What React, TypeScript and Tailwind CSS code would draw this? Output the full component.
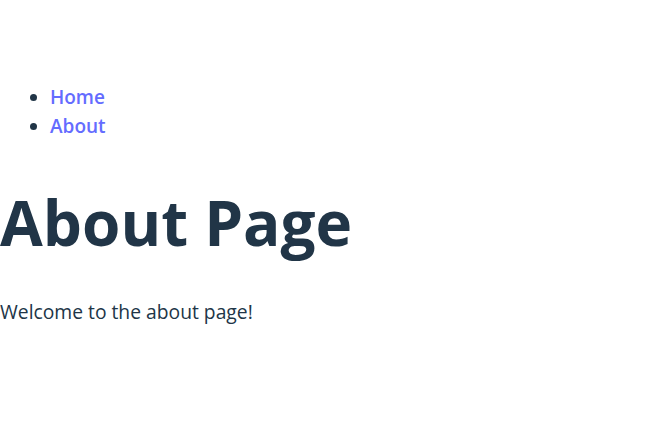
export default function App() {
  return (
    <div className="min-h-screen bg-white pt-[83px] text-[19px] leading-[29px] text-[#213547] font-['Open_Sans',_'Noto_Sans',_sans-serif]">
      <nav>
        <ul className="list-disc pl-[50px] marker:text-[#213547]">
          <li>
            <a href="#" className="font-semibold text-[#646cff]">Home</a>
          </li>
          <li>
            <a href="#" className="font-semibold text-[#646cff]">About</a>
          </li>
        </ul>
      </nav>
      <h1 className="mt-[47px] mb-[41px] text-[62px] leading-[1.1] font-bold">About Page</h1>
      <p className="text-[19.3px]">Welcome to the about page!</p>
    </div>
  );
}
